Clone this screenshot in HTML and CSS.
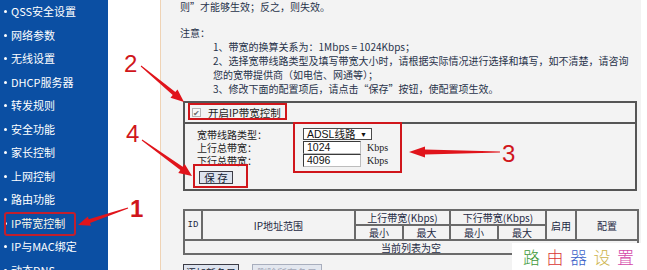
FILE: index.html
```html
<!DOCTYPE html>
<html lang="zh-CN">
<head>
<meta charset="utf-8">
<title>IP带宽控制</title>
<link rel="stylesheet" href="styles.css">
</head>
<body>
<div class="page">
  <nav class="sidebar">
    <ul class="menu">
      <li>QSS安全设置</li>
      <li>网络参数</li>
      <li>无线设置</li>
      <li>DHCP服务器</li>
      <li>转发规则</li>
      <li>安全功能</li>
      <li>家长控制</li>
      <li>上网控制</li>
      <li>路由功能</li>
      <li class="active">IP带宽控制</li>
      <li>IP与MAC绑定</li>
      <li>动态DNS</li>
    </ul>
  </nav>
  <div class="gutter"></div>
  <main class="content">
    <p class="lead">则”才能够生效；反之，则失效。</p>
    <p class="note-title">注意：</p>
    <div class="notes">
      <p>1、带宽的换算关系为：1Mbps = 1024Kbps；</p>
      <p>2、选择宽带线路类型及填写带宽大小时，请根据实际情况进行选择和填写，如不清楚，请咨询</p>
      <p>您的宽带提供商（如电信、网通等）；</p>
      <p>3、修改下面的配置项后，请点击“保存”按钮，使配置项生效。</p>
    </div>
    <section class="panel">
      <div class="panel-head"><span class="check">✔</span><span class="head-text">开启IP带宽控制</span></div>
      <div class="panel-body">
        <div class="form">
          <span class="label">宽带线路类型：</span>
          <span class="select">ADSL线路<span class="caret">▼</span></span>
          <span class="label">上行总带宽：</span>
          <span class="input">1024</span>
          <span class="unit">Kbps</span>
          <span class="label">下行总带宽：</span>
          <span class="input">4096</span>
          <span class="unit">Kbps</span>
        </div>
        <button class="btn save">保 存</button>
      </div>
    </section>
    <table class="rules">
      <colgroup>
        <col class="c-id"><col class="c-ip"><col class="c-n"><col class="c-n2"><col class="c-n"><col class="c-n"><col class="c-on"><col class="c-cfg">
      </colgroup>
      <tr class="r1">
        <td rowspan="2" class="id">ID</td>
        <td rowspan="2">IP地址范围</td>
        <td colspan="2">上行带宽(Kbps)</td>
        <td colspan="2">下行带宽(Kbps)</td>
        <td rowspan="2">启用</td>
        <td rowspan="2">配置</td>
      </tr>
      <tr class="r2">
        <td>最小</td><td>最大</td><td>最小</td><td>最大</td>
      </tr>
      <tr class="r3">
        <td colspan="8">当前列表为空</td>
      </tr>
    </table>
    <div class="actions">
      <button class="btn add">添加新条目</button>
      <button class="btn del" disabled>删除所有条目</button>
    </div>
  </main>
  <div class="edge"></div>
</div>

<div class="watermark"><span class="w1">路</span><span class="w2">由</span><span class="w3">器</span><span class="w4">设</span><span class="w5">置</span></div>

<div class="mark mark-nav"></div>
<div class="mark mark-head"></div>
<div class="mark mark-form"></div>
<div class="mark mark-save"></div>

<svg class="arrows" width="647" height="270" viewBox="0 0 647 270">
  <polygon points="128.2,208.5 90.0,223.0 91.0,225.8 78,225 87.8,216.4 88.8,219.2 127.8,207.5"/>
  <polygon points="140.7,66.4 172.7,95.1 170.5,97.8 184,102 177.5,89.4 175.3,92.1 141.3,65.6"/>
  <polygon points="141.7,140.4 180.3,170.0 178.3,172.9 192,176 184.7,163.9 182.7,166.8 142.3,139.6"/>
  <polygon points="500,152.6 425,154.5 425,157.5 409,152 425,146.5 425,149.5 500,151.4"/>
</svg>

<span class="num n1">1</span>
<span class="num n2">2</span>
<span class="num n3">3</span>
<span class="num n4">4</span>
</body>
</html>
```

FILE: styles.css
```css
* { box-sizing: border-box; margin: 0; padding: 0; }

html, body {
  width: 647px;
  height: 270px;
  overflow: hidden;
  background: #ffffff;
}

body {
  position: relative;
  font-family: "Noto Sans CJK SC", "Liberation Sans", sans-serif;
  font-size: 10px;
  color: #27324a;
}

.page {
  display: flex;
  height: 270px;
}

/* sidebar */
.sidebar {
  flex: none;
  width: 108px;
  background: #0b4fa3;
}

.menu { list-style: none; }

.menu li {
  position: relative;
  height: 23.5px;
  line-height: 23.5px;
  padding-left: 11px;
  color: #ffffff;
  font-size: 11px;
  white-space: nowrap;
}

.menu li::before {
  content: "";
  position: absolute;
  left: 4px;
  top: 10px;
  width: 3px;
  height: 3px;
  border-radius: 50%;
  background: #ffffff;
}

.menu li.active { color: #fbf8e6; }

.gutter {
  flex: none;
  width: 53px;
  background: #ffffff;
  border-right: 1px solid #efd3b5;
}

.content {
  flex: none;
  width: 480px;
  background: #f3f3f3;
  padding-left: 19px;
}

.edge { flex: 1; background: #ffffff; }

.content p {
  line-height: 14px;
  white-space: nowrap;
}

.note-title { margin-top: 12px; }
.notes { padding-left: 33px; }

/* panel */
.panel {
  margin: 5px 0 0 3px;
  width: 454px;
  border: 2px solid #555555;
  color: #1e1e1e;
}

.panel-head {
  display: flex;
  align-items: center;
  height: 21px;
  padding-left: 7px;
  border-bottom: 2px solid #555555;
}

.check {
  width: 9px;
  height: 9px;
  border: 1px solid #b5b5b5;
  background: #f8f8f8;
  color: #6a6a6a;
  font-size: 8px;
  line-height: 7px;
  text-align: center;
  margin-right: 7px;
}

.head-text { font-size: 10.5px; line-height: 14px; }

.panel-body {
  padding: 4px 0 5px 12px;
}

.form {
  display: grid;
  grid-template-columns: 106px 58px auto;
  grid-auto-rows: 13px;
  align-items: center;
}

.label {
  grid-column: 1;
  line-height: 12px;
  white-space: nowrap;
}

.select {
  grid-column: 2 / span 2;
  justify-self: start;
  align-self: start;
  display: flex;
  align-items: center;
  justify-content: space-between;
  width: 69px;
  height: 12px;
  padding: 0 4px 0 3px;
  background: #ffffff;
  border: 1px solid #4a4a4a;
  font-family: "Liberation Sans", "Noto Sans CJK SC", sans-serif;
  font-size: 10.5px;
  line-height: 10px;
  color: #111111;
}

.caret { font-size: 7px; line-height: 7px; }

.input {
  grid-column: 2;
  height: 13px;
  padding-left: 3px;
  background: #ffffff;
  border-style: solid;
  border-width: 1px;
  border-color: #3a3a3a #bdbdbd #bdbdbd #3a3a3a;
  font-family: "Liberation Sans", sans-serif;
  font-size: 10.5px;
  line-height: 11px;
  color: #111111;
}

.unit {
  grid-column: 3;
  margin-left: 6px;
  font-family: "Liberation Serif", serif;
  font-size: 10px;
  line-height: 13px;
  color: #222222;
}

.btn {
  font-family: "Noto Sans CJK SC", sans-serif;
  font-size: 10px;
  color: #141c33;
  background: #dde3ee;
  border: 1px solid #3c3c46;
  line-height: 11px;
  cursor: default;
}

.save {
  display: block;
  margin: 4px 0 0 2px;
  width: 34px;
  height: 13px;
  font-size: 10.5px;
}

/* table */
.rules {
  margin: 18px 0 0 3px;
  width: 454px;
  table-layout: fixed;
  border-collapse: collapse;
  color: #1e2a44;
}

.c-id { width: 18px; }
.c-ip { width: 153px; }
.c-n { width: 48px; }
.c-n2 { width: 47px; }
.c-on { width: 30px; }
.c-cfg { width: 62px; }

.rules td {
  border: 2px solid #6a6a6a;
  padding: 0;
  text-align: center;
  font-size: 10px;
  line-height: 11px;
  white-space: nowrap;
  overflow: hidden;
}

.rules td.id {
  font-family: "Liberation Mono", monospace;
  font-size: 9px;
}

.r1 { height: 15px; }
.r2 { height: 15px; }
.r3 { height: 14px; }

.actions {
  display: flex;
  gap: 13px;
  margin: 9px 0 0 3px;
}

.add { width: 56px; height: 16px; }

.del {
  width: 70px;
  height: 16px;
  color: #a3a8b8;
  background: #e3e7ef;
  border-color: #a8aebd;
}

/* watermark */
.watermark {
  position: absolute;
  left: 512px;
  top: 243px;
  width: 133px;
  height: 27px;
  padding-left: 11px;
  background: #ffffff;
  font-family: "Noto Sans CJK SC", sans-serif;
  font-weight: 300;
  font-size: 17px;
  line-height: 27px;
  letter-spacing: 6.5px;
  white-space: nowrap;
}

.w1 { color: #3f9a3a; }
.w2 { color: #d83434; }
.w3 { color: #3b62c9; }
.w4 { color: #cdb44a; }
.w5 { color: #d447a8; }

/* annotations */
.mark {
  position: absolute;
  border: 2px solid #d0161b;
}

.mark-nav { left: 4px; top: 212px; width: 72px; height: 24px; border-radius: 3px; border-color: #c21f2d; }
.mark-head { left: 188px; top: 103px; width: 99px; height: 17px; }
.mark-form { left: 293px; top: 122px; width: 109px; height: 51px; }
.mark-save { left: 193px; top: 164px; width: 55px; height: 24px; }

.arrows {
  position: absolute;
  left: 0;
  top: 0;
  fill: #e0141b;
}

.num {
  position: absolute;
  font-family: "Liberation Sans", sans-serif;
  font-size: 24px;
  line-height: 24px;
  color: #d0161b;
}

.n1 { left: 130px; top: 197px; font-weight: bold; }
.n2 { left: 124px; top: 52px; }
.n3 { left: 502px; top: 142px; }
.n4 { left: 126px; top: 122px; }
```
